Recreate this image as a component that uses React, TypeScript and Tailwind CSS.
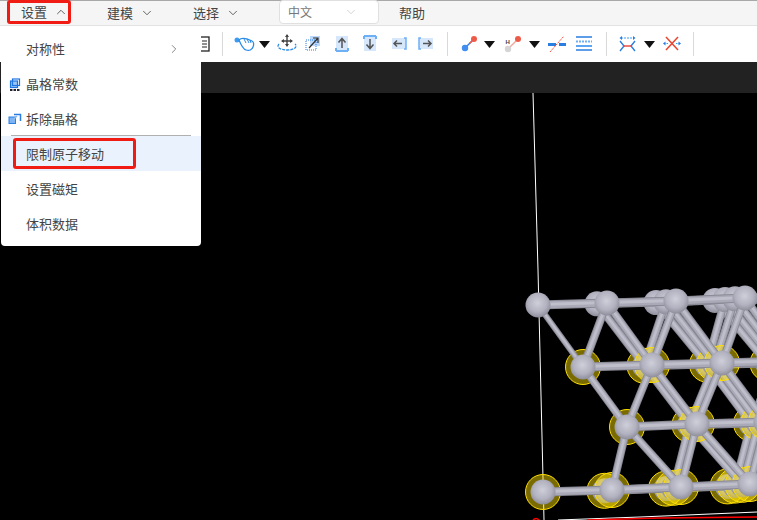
import { ChevronDown, ChevronRight, ChevronUp } from 'lucide-react';

type Pt = [number, number];

const rows: Pt[][] = [
  [[538, 305], [607, 303], [676, 301], [745, 298], [815, 296]],
  [[583, 367], [652, 365], [722, 363], [790, 361]],
  [[627, 427], [697, 424], [766, 422]],
  [[543, 492], [612, 490], [681, 487], [750, 484], [820, 481]],
];

// [row, col] -> [row, col]
const diagonals: [number, number, number, number][] = [
  [0, 0, 1, 0], [0, 1, 1, 0], [0, 1, 1, 1], [0, 2, 1, 1], [0, 2, 1, 2], [0, 3, 1, 2], [0, 3, 1, 3],
  [1, 0, 2, 0], [1, 1, 2, 0], [1, 1, 2, 1], [1, 2, 2, 1], [1, 2, 2, 2], [1, 3, 2, 2],
  [2, 0, 3, 1], [2, 0, 3, 2], [2, 1, 3, 2], [2, 1, 3, 3], [2, 2, 3, 3], [2, 2, 3, 4],
];

function shift(p: Pt, row: number, k: number): Pt {
  const dx = row === 0 ? 10 : 7.5;
  return [p[0] - dx * k, p[1] + k * 0.8];
}

// 第 k 层只有列号 >= k 的原子
function visible(col: number, k: number) {
  return col >= k;
}

function Stick({ a, b, w = 8 }: { a: Pt; b: Pt; w?: number }) {
  return (
    <g>
      <line x1={a[0]} y1={a[1]} x2={b[0]} y2={b[1]} stroke="#8a8a96" strokeWidth={w} />
      <line x1={a[0]} y1={a[1]} x2={b[0]} y2={b[1]} stroke="#a9a9b7" strokeWidth={w - 2} />
      <line x1={a[0]} y1={a[1] - 0.5} x2={b[0]} y2={b[1] - 0.5} stroke="#bfbfcb" strokeWidth={w / 3} />
    </g>
  );
}

function Plane({ k }: { k: number }) {
  return (
    <g>
      {rows.slice(1).map((r, j) =>
        r.map((p, i) => {
          if (!visible(i, k)) return null;
          const c = shift(p, j + 1, k);
          return <circle key={`${j}-${i}`} cx={c[0]} cy={c[1]} r={17.5} fill="#ffdf00" fillOpacity={0.48} stroke="#ffe000" strokeWidth={1} />;
        })
      )}
      {diagonals.map(([r1, c1, r2, c2], i) =>
        visible(c1, k) && visible(c2, k) ? (
          <Stick key={i} a={shift(rows[r1][c1], r1, k)} b={shift(rows[r2][c2], r2, k)} w={i === 0 ? 6 : 8} />
        ) : null
      )}
      {rows.map((r, j) =>
        r.slice(0, -1).map((p, i) =>
          visible(i, k) ? <Stick key={`${j}-${i}`} a={shift(p, j, k)} b={shift(r[i + 1], j, k)} w={9} /> : null
        )
      )}
      {rows.map((r, j) =>
        r.map((p, i) => {
          if (!visible(i, k)) return null;
          const c = shift(p, j, k);
          return <circle key={`${j}-${i}`} cx={c[0]} cy={c[1]} r={12.5} fill="url(#atom)" />;
        })
      )}
    </g>
  );
}

function Scene() {
  return (
    <svg className="absolute left-0 top-0" width="757" height="427" viewBox="0 93 757 427">
      <defs>
        <radialGradient id="atom" cx="0.48" cy="0.42" r="0.6">
          <stop offset="0" stopColor="#cfcfda" />
          <stop offset="0.6" stopColor="#b2b2c0" />
          <stop offset="1" stopColor="#8b8b98" />
        </radialGradient>
      </defs>
      <polyline points="533,93 538,270 541,395 544,520" fill="none" stroke="#fff" strokeWidth="1" />
      <polyline points="558,520 640,517 757,512" fill="none" stroke="#fff" strokeWidth="1" />
      <polyline points="587,520 660,518 757,517" fill="none" stroke="#f00" strokeWidth="1.5" />
      <path d="M533 520 q3 -3 6 0" fill="none" stroke="#f00" strokeWidth="1.5" />
      <Plane k={3} />
      <Plane k={2} />
      <Plane k={1} />
      <Plane k={0} />
    </svg>
  );
}

function Caret() {
  return (
    <svg width="11" height="7" viewBox="0 0 11 7">
      <path d="M0 0h11L5.5 7z" fill="#111" />
    </svg>
  );
}

function Sep() {
  return <div className="h-6 w-px bg-[#d9d9d9]" />;
}

function IconBox({ children, w = 22 }: { children: React.ReactNode; w?: number }) {
  return (
    <svg width={w} height="22" viewBox={`0 0 ${w} 22`} fill="none">
      {children}
    </svg>
  );
}

function Toolbar() {
  return (
    <div className="flex h-[36px] items-center bg-white pl-[200px]">
      <IconBox w={11}>
        <rect x="0" y="4" width="9" height="14" fill="#fff" stroke="#222" strokeWidth="1.3" />
        <path d="M2 8h5M2 11h5M2 14h5" stroke="#222" />
      </IconBox>
      <div className="ml-[11px]"><Sep /></div>
      <div className="ml-[11px]">
        <IconBox w={22}>
          <circle cx="3" cy="7" r="2.5" fill="#3d9cf0" />
          <path d="M5 7c3-3 6-1 8-1l5 2c2 1 2 4 1 6-1 3-4 4-7 3-3-1-5-5-7-10z" stroke="#2a8be8" strokeWidth="1.3" fill="#fff" />
          <path d="M10 6l2 4M13 6l2 4M16 7l1 3" stroke="#2a8be8" />
        </IconBox>
      </div>
      <div className="ml-[3px]"><Caret /></div>
      <div className="ml-[5px]">
        <IconBox w={24}>
          <path d="M12 2v11M7 8h10" stroke="#444" strokeWidth="1.4" />
          <path d="M12 1l-2 3h4zM12 14l-2-3h4zM6 8l3-2v4zM18 8l-3-2v4z" fill="#444" />
          <path d="M4 11c-3 3 1 6 8 6s11-3 8-6" stroke="#2a8be8" strokeWidth="1.3" strokeDasharray="3 1" />
        </IconBox>
      </div>
      <div className="ml-[6px]">
        <IconBox w={16}>
          <rect x="5" y="3" width="10" height="10" fill="#bcd8fb" />
          <rect x="1" y="7" width="10" height="10" stroke="#2a7de1" strokeDasharray="1 1" />
          <path d="M4 15L13 5M8 5h5v5" stroke="#333" strokeWidth="1.2" />
        </IconBox>
      </div>
      <div className="ml-[14px]">
        <IconBox w={14}>
          <rect x="1" y="3" width="12" height="15" fill="#d6e7fc" />
          <path d="M1 18h12M1 18v-3M13 18v-3" stroke="#6eb0f5" strokeWidth="2" />
          <path d="M7 15V6M3.5 9.5L7 5.5l3.5 4" stroke="#555" strokeWidth="1.5" />
        </IconBox>
      </div>
      <div className="ml-[14px]">
        <IconBox w={14}>
          <rect x="1" y="3" width="12" height="15" fill="#d6e7fc" />
          <path d="M1 3h12M1 3v3M13 3v3" stroke="#6eb0f5" strokeWidth="2" />
          <path d="M7 6v9M3.5 11.5L7 15.5l3.5-4" stroke="#555" strokeWidth="1.5" />
        </IconBox>
      </div>
      <div className="ml-[14px]">
        <IconBox w={16}>
          <rect x="1" y="5" width="14" height="11" fill="#d6e7fc" />
          <path d="M13 5h2v11h-2" stroke="#6eb0f5" strokeWidth="1.5" />
          <path d="M11 10.5H3M6 7.5l-3 3 3 3" stroke="#555" strokeWidth="1.5" />
        </IconBox>
      </div>
      <div className="ml-[11px]">
        <IconBox w={16}>
          <rect x="1" y="5" width="14" height="11" fill="#d6e7fc" />
          <path d="M3 5H1v11h2" stroke="#6eb0f5" strokeWidth="1.5" />
          <path d="M5 10.5h8M10 7.5l3 3-3 3" stroke="#555" strokeWidth="1.5" />
        </IconBox>
      </div>
      <div className="ml-[13px]"><Sep /></div>
      <div className="ml-[13px]">
        <IconBox w={18}>
          <path d="M4 15L13 6" stroke="#2a7de1" strokeWidth="1.5" />
          <path d="M8.5 10.5L13 6" stroke="#ee5a48" strokeWidth="1.5" />
          <circle cx="4" cy="15" r="3.2" fill="#3f8ef0" />
          <circle cx="13" cy="6" r="3" fill="#ee5a48" />
        </IconBox>
      </div>
      <div className="ml-[5px]"><Caret /></div>
      <div className="ml-[9px]">
        <IconBox w={18}>
          <text x="1.5" y="11" fontSize="6" fontWeight="700" fill="#444" fontFamily="Liberation Sans, sans-serif">H</text>
          <path d="M5 15L13 7" stroke="#f4a79e" strokeWidth="1.5" />
          <circle cx="4" cy="16" r="3.2" fill="#d5d5d5" />
          <circle cx="14" cy="6" r="3" fill="#ee5a48" />
        </IconBox>
      </div>
      <div className="ml-[7px]"><Caret /></div>
      <div className="ml-[8px]">
        <IconBox w={18}>
          <path d="M0 11.5h8M11 11.5h7" stroke="#2a7de1" strokeWidth="3" />
          <path d="M2 19L16 3" stroke="#ee5040" strokeDasharray="2 1" />
        </IconBox>
      </div>
      <div className="ml-[10px]">
        <IconBox w={16}>
          <path d="M0 4h16M0 17h16" stroke="#2a7de1" strokeWidth="1.5" />
          <path d="M0 8.5h16" stroke="#6eb0f5" strokeWidth="2" strokeDasharray="2 1" />
          <path d="M0 13h16" stroke="#5aa6f3" strokeWidth="2" />
        </IconBox>
      </div>
      <div className="ml-[14px]"><Sep /></div>
      <div className="ml-[12px]">
        <IconBox w={17}>
          <path d="M2 5h13" stroke="#39a0f2" strokeDasharray="2 1" />
          <path d="M3 3L0.5 5 3 7zM14 3l2.5 2L14 7z" fill="#2a7de1" />
          <path d="M1 8l4 5-4 5M16 8l-4 5 4 5" stroke="#2a7de1" strokeWidth="1.4" />
          <path d="M5 13h7" stroke="#ee4030" strokeWidth="1.4" />
        </IconBox>
      </div>
      <div className="ml-[8px]"><Caret /></div>
      <div className="ml-[8px]">
        <IconBox w={18}>
          <path d="M3 4l12 13M15 4L3 17" stroke="#e8452f" strokeWidth="1.5" />
          <path d="M1 10.5h4M13 10.5h4" stroke="#39a0f2" strokeDasharray="1.5 1" />
          <path d="M2.5 8.5L0 10.5l2.5 2zM15.5 8.5l2.5 2-2.5 2z" fill="#2a7de1" />
        </IconBox>
      </div>
      <div className="ml-[12px]"><Sep /></div>
    </div>
  );
}

const menuItems = [
  { label: '对称性', arrow: true },
  { label: '晶格常数', icon: 'lattice' },
  { label: '拆除晶格', icon: 'remove' },
  { label: '限制原子移动', active: true },
  { label: '设置磁矩' },
  { label: '体积数据' },
];

function MenuIcon({ kind }: { kind?: string }) {
  if (kind === 'lattice') {
    return (
      <svg className="absolute left-[8px] top-[12px]" width="12" height="14" viewBox="0 0 12 14" fill="none">
        <rect x="1.5" y="3" width="7" height="6.5" fill="#9cc6f7" stroke="#1f74e0" strokeWidth="1.2" />
        <rect x="3.5" y="1" width="7" height="6.5" stroke="#1f74e0" strokeWidth="1.2" />
        <path d="M1 12h10" stroke="#223" strokeWidth="2" strokeDasharray="2.5 1" />
      </svg>
    );
  }
  if (kind === 'remove') {
    return (
      <svg className="absolute left-[7px] top-[12px]" width="14" height="12" viewBox="0 0 14 12" fill="none">
        <rect x="1" y="4" width="6.5" height="6.5" fill="#7db4f4" stroke="#2a7de1" />
        <path d="M6 1.5h6.5v6.5" stroke="#2a7de1" strokeWidth="1.5" />
        <path d="M5 7l4-4" stroke="#8fb8ea" strokeWidth="1.5" />
      </svg>
    );
  }
  return null;
}

function Menu() {
  return (
    <div className="absolute left-[1px] top-[31px] w-[200px] rounded-sm bg-white pb-[5px]">
      {menuItems.map((item, i) => (
        <div
          key={i}
          className={`relative flex h-[35px] items-center pl-[25px] text-[13px] text-[#444] ${item.active ? 'bg-[#e9f2fd]' : ''}`}
        >
          <MenuIcon kind={item.icon} />
          <span>{item.label}</span>
          {item.arrow && <ChevronRight className="absolute right-[20px] top-[11px] h-[14px] w-[14px] text-[#555]" strokeWidth={1.2} />}
          {item.active && <div className="absolute left-[12px] top-[2px] h-[31px] w-[123px] rounded-[3px] border-[3px] border-[#f01c14]" />}
          {i === 2 && <div className="absolute bottom-0 left-[10px] right-[10px] h-px bg-[#b0b0b0]" />}
        </div>
      ))}
    </div>
  );
}

export default function App() {
  return (
    <div className="relative flex h-[520px] w-[757px] flex-col overflow-hidden bg-black" style={{ fontFamily: '"Noto Sans CJK SC", "Liberation Sans", sans-serif' }}>
      {/* 顶部菜单 */}
      <div className="flex h-[26px] items-center border-t border-b border-t-[#a8a8a8] border-b-[#e2e2e2] bg-[#f5f5f5] text-[13px] text-[#444]">
        <div className="mb-[2px] ml-[7px] flex h-[24px] w-[64px] shrink-0 items-center whitespace-nowrap rounded-[3px] border-[3px] border-[#f01c14] pl-[11px]">
          <span>设置</span>
          <ChevronUp className="ml-[7px] h-[14px] w-[14px] shrink-0" strokeWidth={1.4} />
        </div>
        <div className="ml-[36px] flex items-center">
          <span>建模</span>
          <ChevronDown className="ml-[7px] h-[14px] w-[14px]" strokeWidth={1.4} />
        </div>
        <div className="ml-[39px] flex items-center">
          <span>选择</span>
          <ChevronDown className="ml-[7px] h-[14px] w-[14px]" strokeWidth={1.4} />
        </div>
        <div className="mb-[2px] ml-[39px] flex h-[24px] w-[100px] items-center justify-between rounded-[4px] border border-[#e0e0e0] bg-white pl-[8px] pr-[20px] text-[12px] text-[#777]">
          <span>中文</span>
          <ChevronDown className="h-[14px] w-[14px] text-[#c4c4c4]" strokeWidth={1.2} />
        </div>
        <span className="ml-[20px]">帮助</span>
      </div>
      <Toolbar />
      <div className="h-[31px] bg-[#222222]" />
      <div className="relative flex-1 bg-black">
        <Scene />
      </div>
      <Menu />
    </div>
  );
}
